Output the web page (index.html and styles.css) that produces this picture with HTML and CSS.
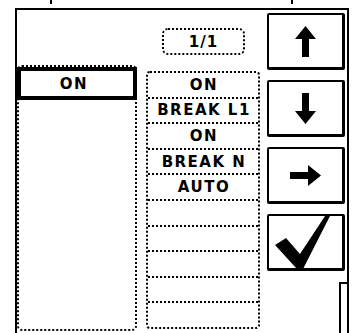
FILE: index.html
```html
<!DOCTYPE html>
<html lang="en">
<head>
    <meta charset="UTF-8">
    <meta name="viewport" content="width=device-width, initial-scale=1.0">
    <title>Switch Mode</title>
    <link rel="stylesheet" href="styles.css">
</head>
<body>
    <div class="top-strip">
        <span class="tick tick-left"></span>
        <span class="tick tick-right"></span>
    </div>
    <div class="frame">
        <!-- Valor seleccionado -->
        <div class="select-col">
            <div class="selected">ON</div>
        </div>

        <!-- Lista de opciones -->
        <div class="options-col">
            <div class="page-badge">1/1</div>
            <div class="options">
                <div class="option">ON</div>
                <div class="option">BREAK L1</div>
                <div class="option">ON</div>
                <div class="option">BREAK N</div>
                <div class="option">AUTO</div>
                <div class="option"></div>
                <div class="option"></div>
                <div class="option"></div>
                <div class="option"></div>
                <div class="option"></div>
            </div>
        </div>

        <!-- Botones -->
        <div class="buttons-col">
            <div class="btn">
                <svg width="21" height="31" viewBox="0 0 21 31"><polygon points="10.5,0 21,13 14,13 14,31 7,31 7,13 0,13"/></svg>
            </div>
            <div class="btn">
                <svg width="21" height="31" viewBox="0 0 21 31"><polygon points="10.5,31 21,18 14,18 14,0 7,0 7,18 0,18"/></svg>
            </div>
            <div class="btn">
                <svg width="31" height="21" viewBox="0 0 31 21"><polygon points="0,7 18,7 18,0 31,10.5 18,21 18,14 0,14"/></svg>
            </div>
            <div class="btn btn-check">
                <svg class="check" viewBox="0 0 73 52" preserveAspectRatio="none"><polygon points="6,29 17,22 31,38 56,0 61,0 34,53 28,53"/></svg>
            </div>
            <div class="scroll-stub"></div>
        </div>
    </div>
</body>
</html>
```

FILE: styles.css
```css
body {
    margin: 0;
    background-color: #fff;
    color: #000;
    font-family: "DejaVu Sans", sans-serif;
    overflow: hidden;
}
.top-strip {
    height: 8px;
    display: flex;
}
.tick {
    width: 2px;
    height: 4px;
    background-color: #000;
}
.tick-left {
    margin-left: 50px;
}
.tick-right {
    margin-left: 239px;
}
.frame {
    margin-left: 15px;
    width: 334px;
    height: 325px;
    box-sizing: border-box;
    border: 2px solid #000;
    border-bottom: none;
    display: flex;
    align-items: flex-start;
    overflow: hidden;
}
.select-col {
    width: 120px;
    height: 266px;
    margin-top: 55px;
    box-sizing: border-box;
    border: 2px dotted #000;
    border-radius: 5px;
}
.selected {
    margin: 0 -2px;
    height: 33px;
    box-sizing: border-box;
    border: 4px solid #000;
    display: flex;
    align-items: center;
    justify-content: center;
    padding-right: 6px;
    font-size: 15px;
    font-weight: bold;
    letter-spacing: 1.5px;
}
.options-col {
    width: 114px;
    margin-left: 9px;
    margin-top: 18px;
}
.page-badge {
    margin-left: 16px;
    width: 83px;
    height: 27px;
    box-sizing: border-box;
    border: 2px dotted #000;
    border-radius: 6px;
    display: flex;
    align-items: center;
    justify-content: center;
    font-size: 15px;
    font-weight: bold;
    letter-spacing: 1px;
}
.options {
    margin-top: 16px;
    border: 2px dotted #000;
    border-radius: 4px;
}
.option {
    height: 23.6px;
    display: flex;
    align-items: center;
    justify-content: center;
    padding-left: 2px;
    font-size: 15px;
    font-weight: bold;
    letter-spacing: 1.5px;
    border-top: 2px dotted #000;
}
.option:first-child {
    border-top: none;
}
.buttons-col {
    width: 78px;
    margin-left: 7px;
    margin-top: 3px;
    display: flex;
    flex-direction: column;
    gap: 10px;
}
.btn {
    height: 57px;
    box-sizing: border-box;
    border-style: solid;
    border-color: #000;
    border-width: 2px 3px 3px 2px;
    border-radius: 2px;
    display: flex;
    align-items: center;
    justify-content: center;
}
.btn svg {
    display: block;
}
.btn-check {
    align-items: stretch;
    justify-content: stretch;
}
.btn-check .check {
    width: 100%;
    height: 100%;
    overflow: visible;
}
.scroll-stub {
    margin-top: 1px;
    margin-left: 72px;
    width: 8px;
    height: 60px;
    border-left: 2px solid #000;
    border-top: 2px solid #000;
}
```
